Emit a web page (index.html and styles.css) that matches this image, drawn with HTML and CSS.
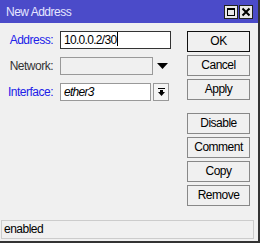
FILE: index.html
```html
<!DOCTYPE html>
<html lang="en">
  <head>
    <meta charset="utf-8">
    <title>New Address</title>
    <link rel="stylesheet" href="styles.css">
  </head>
  <body>
    <div class="window">
      <div class="titlebar">
        <span class="title">New Address</span>
        <div class="title-btns">
          <span class="tbtn">
            <svg width="12" height="12" viewBox="0 0 12 12"><rect x="2.5" y="2.5" width="7" height="7" fill="none" stroke="#000"/><rect x="2" y="2" width="8" height="2" fill="#000"/></svg>
          </span>
          <span class="tbtn">
            <svg width="12" height="12" viewBox="0 0 12 12"><path d="M2.5 2.5 L9.5 9.5 M9.5 2.5 L2.5 9.5" stroke="#000" stroke-width="2"/></svg>
          </span>
        </div>
      </div>

      <div class="content">
        <div class="form">
          <div class="row">
            <label class="lbl blue">Address:</label>
            <div class="field focused">10.0.0.2/30<span class="caret"></span></div>
          </div>
          <div class="row">
            <label class="lbl">Network:</label>
            <div class="field disabled"></div>
            <span class="arrow">
              <svg width="11" height="6" viewBox="0 0 11 6"><path d="M0 0 H11 L5.5 6 Z" fill="#000"/></svg>
            </span>
          </div>
          <div class="row">
            <label class="lbl blue">Interface:</label>
            <div class="field short"><i>ether3</i></div>
            <span class="dropbtn">
              <svg width="9" height="9" viewBox="0 0 9 9"><rect x="1" y="0" width="7" height="1" fill="#000"/><path d="M3 2 H6 V4 H8 L4.5 8 L1 4 H3 Z" fill="#000"/></svg>
            </span>
          </div>
        </div>

        <div class="buttons">
          <div class="btn default">OK</div>
          <div class="btn">Cancel</div>
          <div class="btn">Apply</div>
          <div class="btn gap">Disable</div>
          <div class="btn">Comment</div>
          <div class="btn">Copy</div>
          <div class="btn">Remove</div>
        </div>
      </div>

      <div class="status">enabled</div>
    </div>
  </body>
</html>
```

FILE: styles.css
```css
body{
  margin:0;
  background-color: white;
  font-family: "Liberation Sans", Arial, sans-serif;
  font-size:11.5px;
  letter-spacing:-0.5px;
}
.window{
  width:258px;
  height:241px;
  background-color:#f0f0f0;
  border-right:2px solid #333;
  border-bottom:2px solid #333;
  display:flex;
  flex-direction:column;
}
.titlebar{
  height:23px;
  background-color:#4b4bc9;
  color:#e6e6ff;
  display:flex;
  align-items:center;
  justify-content:space-between;
  padding-left:6px;
  padding-right:5px;
  font-size:12px;
}
.title-btns{
  display:flex;
  gap:1px;
}
.tbtn{
  width:14px;
  height:14px;
  box-sizing:border-box;
  border:1px solid #222;
  background-color:#e8e8e8;
  display:flex;
  align-items:center;
  justify-content:center;
}
.content{
  flex:1;
  display:flex;
  padding-top:8px;
}
.form{
  width:187px;
  display:flex;
  flex-direction:column;
  gap:8px;
}
.row{
  display:flex;
  align-items:center;
  height:18px;
}
.lbl{
  width:53px;
  text-align:right;
  margin-right:7px;
  color:#333;
  font-size:12px;
}
.blue{
  color:#2020e8;
}
.field{
  width:111px;
  height:18px;
  box-sizing:border-box;
  border:1px solid #999;
  background-color:white;
  padding-left:3px;
  line-height:16px;
  font-size:12px;
  letter-spacing:-0.7px;
}
.focused{
  border-color:#333;
}
.caret{
  display:inline-block;
  width:1px;
  height:14px;
  background-color:#000;
  vertical-align:-2px;
  margin-left:1px;
}
.disabled{
  width:93px;
  background-color:#f0f0f0;
}
.short{
  width:91px;
}
.arrow{
  margin-left:4px;
  display:flex;
}
.dropbtn{
  margin-left:2px;
  width:16px;
  height:18px;
  box-sizing:border-box;
  border:1px solid #999;
  background-color:#f4f4f4;
  display:flex;
  align-items:center;
  justify-content:center;
}
.buttons{
  display:flex;
  flex-direction:column;
  gap:3px;
  width:63px;
}
.btn{
  height:21px;
  box-sizing:border-box;
  border:1px solid #888;
  background-color:#f0f0f0;
  text-align:center;
  line-height:19px;
  font-size:12px;
}
.default{
  border-color:#111;
}
.gap{
  margin-top:10px;
}
.status{
  margin:0 4px 2px 1px;
  height:19px;
  box-sizing:border-box;
  border:1px solid #ccc;
  padding-left:2px;
  line-height:17px;
  font-size:12px;
}
```
